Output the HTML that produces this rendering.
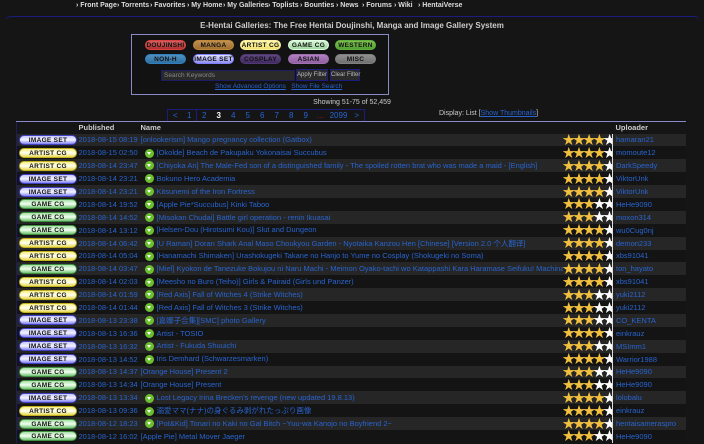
<!DOCTYPE html>
<html><head><meta charset="utf-8"><style>
*{margin:0;padding:0;box-sizing:border-box}
html,body{background:#151515}
body{width:704px;height:444px;overflow:hidden;font-family:"Liberation Sans","Noto Sans CJK JP",sans-serif;font-size:7.5px;color:#ccc;position:relative}
.a{position:absolute;white-space:nowrap}
.strip{position:absolute;background:#151515}
.nav span{position:absolute;top:2px;font-weight:bold;color:#ddd;font-size:7px}
.frame{position:absolute;left:5px;top:16px;width:695px;height:428px;border-top:1px solid #1c1c80;border-radius:6px 6px 0 0;background:#151515}
.box{position:absolute;left:131px;top:34px;width:258px;height:61px;border:1px solid #8a8ac8;background:#121212}
.cb{position:absolute;width:41px;height:10px;border-radius:5px;font-size:6.5px;font-weight:bold;color:#111;text-align:center;line-height:9px;letter-spacing:.3px}
a{color:#2864d0;text-decoration:none}
.pg{position:absolute;top:109px;left:167px;height:13px;display:flex;border:1px solid #1c1c80;background:#151515}
.pg div{width:14.5px;text-align:center;line-height:12px;color:#2864d0;font-size:8px}
.tw{position:absolute;left:16px;top:121px;width:670px;height:323px;overflow:hidden}
table{width:670px;border-collapse:collapse;border-top:1px solid #8a8ac8;border-left:1px solid #1c1c60;border-right:1px solid #1c1c60;table-layout:fixed}
td,th{height:12.9px;padding:0;white-space:nowrap;overflow:hidden;font-size:7.5px}
th{text-align:left;color:#ccc;font-weight:bold;height:12px}
tr:nth-child(odd) td{background:#262626}
tr:nth-child(even) td{background:#141414}
tr.h th{background:#151515}
.p{display:inline-block;width:58px;height:10px;border-radius:5px;font-size:6.5px;font-weight:bold;color:#111;text-align:center;line-height:9px;margin-left:2px;vertical-align:middle;letter-spacing:.3px}
.is{background:linear-gradient(#c8c8ff,#f4f4ff 50%,#8080f0);border:1px solid #4040c0}
.ac{background:linear-gradient(#f8f08a,#fffff0 50%,#e8d850);border:1px solid #c0b020}
.gc{background:linear-gradient(#a8e0a8,#f0fff0 50%,#70c070);border:1px solid #409040}
.d{color:#2864d0}
.i{display:inline-block;width:9px;height:9px;border-radius:50%;background:#6cc030;vertical-align:middle;margin:0 3px 0 4px;position:relative}
.i:after{content:"";position:absolute;left:2px;top:3px;border:2.5px solid transparent;border-top:3px solid #fff}
.st{color:#f2c040;font-size:12.5px;letter-spacing:-2.3px;border-right:1px solid #ddd;line-height:12px}
.st b{color:#fff;font-weight:normal}
</style></head><body style="background:#151515">
<div class="strip" style="left:0;top:0;width:704px;height:17px"></div>
<div class="strip" style="left:0;top:10px;width:6px;height:434px"></div>
<div class="strip" style="left:699px;top:10px;width:5px;height:434px"></div>
<div class="frame"></div>
<div class="nav">
<span style="left:76px">› Front Page</span><span style="left:117px">› Torrents</span><span style="left:150px">› Favorites</span><span style="left:187px">› My Home</span><span style="left:223px">› My Galleries</span><span style="left:268px">› Toplists</span><span style="left:300px">› Bounties</span><span style="left:336px">› News</span><span style="left:362px">› Forums</span><span style="left:394px">› Wiki</span><span style="left:418px">› HentaiVerse</span>
</div>
<div class="a" style="left:0;width:704px;text-align:center;top:21px;font-weight:bold;font-size:8px;color:#ccc">E-Hentai Galleries: The Free Hentai Doujinshi, Manga and Image Gallery System</div>
<div class="box"></div>
<div class="cb" style="left:145px;top:40px;background:linear-gradient(#d06060,#b03030);border:1px solid #e04040">DOUJINSHI</div>
<div class="cb" style="left:193px;top:40px;background:linear-gradient(#c09050,#a07030);border:1px solid #c08838">MANGA</div>
<div class="cb" style="left:240px;top:40px;background:linear-gradient(#fff8b0,#f0e070);border:1px solid #fff0a0">ARTIST CG</div>
<div class="cb" style="left:288px;top:40px;background:linear-gradient(#d8f8d8,#a0d8a0);border:1px solid #e0ffe0">GAME CG</div>
<div class="cb" style="left:335px;top:40px;background:linear-gradient(#80c050,#50a030);border:1px solid #60b040">WESTERN</div>
<div class="cb" style="left:145px;top:54px;background:linear-gradient(#5090c0,#3070a0);border:1px solid #3080c0">NON-H</div>
<div class="cb" style="left:193px;top:54px;background:linear-gradient(#e0e0ff,#9090f0);border:1px solid #8080ff">IMAGE SET</div>
<div class="cb" style="left:240px;top:54px;background:linear-gradient(#604880,#402860);border:1px solid #503870">COSPLAY</div>
<div class="cb" style="left:288px;top:54px;background:linear-gradient(#b080c0,#9060a0);border:1px solid #a070b0">ASIAN PORN</div>
<div class="cb" style="left:335px;top:54px;background:linear-gradient(#909090,#707070);border:1px solid #808080">MISC</div>
<div class="a" style="left:161px;top:70px;width:134px;height:11px;background:#2a2a2a;border:1px solid #1c1c60;color:#888;font-size:6.5px;line-height:9px;padding-left:2px">Search Keywords</div>
<div class="a" style="left:296px;top:69px;width:32px;height:12px;background:#2a2a2a;border:1px solid #1c1c80;color:#bbb;font-size:6px;line-height:10px;text-align:center">Apply Filter</div>
<div class="a" style="left:330px;top:69px;width:30px;height:12px;background:#2a2a2a;border:1px solid #1c1c80;color:#bbb;font-size:6px;line-height:10px;text-align:center">Clear Filter</div>
<div class="a" style="left:215px;top:83px;font-size:6.5px"><a style="text-decoration:underline">Show Advanced Options</a> &nbsp; <a style="text-decoration:underline">Show File Search</a></div>
<div class="a" style="left:0;width:704px;text-align:center;top:99px;font-size:7px;color:#ccc">Showing 51-75 of 52,459</div>
<div class="pg"><div>&lt;</div><div style="border-right:1px solid #1c1c80">1</div><div>2</div><div style="color:#fff;font-weight:bold">3</div><div>4</div><div>5</div><div>6</div><div>7</div><div>8</div><div>9</div><div style="color:#a02020">...</div><div style="width:22px">2099</div><div>&gt;</div></div>
<div class="a" style="left:439px;top:110px;font-size:7px;color:#ccc">Display: List [<a style="text-decoration:underline">Show Thumbnails</a>]</div>
<div class="tw"><table>
<colgroup><col style="width:62px"><col style="width:62px"><col style="width:422px"><col style="width:50px"><col style="width:74px"></colgroup>
<tr class="h"><th></th><th>Published</th><th>Name</th><th></th><th style="padding-left:3px">Uploader</th></tr>
<tbody id="b"></tbody>
</table></div>
<script>
var R=[["is","2018-08-15 08:19","[onlookerism] Mango pregnancy collection (Gatbox)","hamaran21",0,4],
["ac","2018-08-15 02:50","[Okolde] Beach de Pakupaku Yokonaisai Succubus","momoute12",1,4],
["ac","2018-08-14 23:47","[Chiyoka An] The Male-Fed son of a distinguished family - The spoiled rotten brat who was made a maid - [English]","DarkSpeedy",1,4],
["is","2018-08-14 23:21","Bokuno Hero Academia","ViktorUnk",1,4],
["is","2018-08-14 23:21","Kitsunemi of the Iron Fortress","ViktorUnk",1,4],
["gc","2018-08-14 19:52","[Apple Pie*Succubus] Kinki Taboo","HeHe9090",1,3],
["gc","2018-08-14 14:52","[Misokan Chudai] Battle girl operation - renin Ikuasai","moxon314",1,3],
["gc","2018-08-14 13:12","[Helsen-Dou (Hirotsumi Kou)] Slut and Dungeon","wu0Cug0nj",1,4],
["ac","2018-08-14 06:42","[U Raman] Doran Shark Anal Maso Choukyou Garden - Nyotaika Kanzou Hen [Chinese] [Version 2.0 个人翻译]","demon233",1,4],
["ac","2018-08-14 05:04","[Hanamachi Shimaken] Urashokugeki Takane no Hanjo to Yume no Cosplay (Shokugeki no Soma)","xbs91041",1,4],
["gc","2018-08-14 03:47","[Miel] Kyokon de Tanezuke Bokujou ni Naru Machi - Meimon Oyako-tachi wo Katappashi Kara Haramase Seifuku! Machinaka","ton_hayato",1,4],
["ac","2018-08-14 02:03","[Meesho no Buro (Teiho)] Girls & Pairaid (Girls und Panzer)","xbs91041",1,4],
["ac","2018-08-14 01:59","[Red Axis] Fall of Witches 4 (Strike Witches)","yuki2112",1,3],
["ac","2018-08-14 01:44","[Red Axis] Fall of Witches 3 (Strike Witches)","yuki2112",1,3],
["is","2018-08-13 23:38","[嘉娜子合集][SMC] photo Gallery","CO_KENTA",1,3],
["is","2018-08-13 16:36","Artist - TOSIO","einkrauz",1,4],
["is","2018-08-13 16:32","Artist - Fukuda Shuuichi","MSImm1",1,3],
["is","2018-08-13 14:52","Iris Demhard (Schwarzesmarken)","Warrior1988",1,4],
["gc","2018-08-13 14:37","[Orange House] Present 2","HeHe9090",0,3],
["gc","2018-08-13 14:34","[Orange House] Present","HeHe9090",0,3],
["is","2018-08-13 13:34","Lost Legacy Irina Brecken's revenge (new updated 19.8.13)","lolobalu",1,4],
["ac","2018-08-13 09:36","溺愛ママ(ナナ)の身ぐるみ剥がれたっぷり画像","einkrauz",1,4],
["gc","2018-08-12 18:23","[Pot&Kid] Tonari no Kaki no Gal Bitch ~Yuu-wa Kanojo no Boyfriend 2~","hentaisameraspro",1,4],
["gc","2018-08-12 16:02","[Apple Pie] Metal Mover Jaeger","HeHe9090",0,3]];
var N={is:"IMAGE SET",ac:"ARTIST CG",gc:"GAME CG"},h="";
R.forEach(function(r){var s="★★★★★".slice(0,r[5])+"<b>"+"★★★★★".slice(r[5])+"</b>";
h+='<tr><td><span class="p '+r[0]+'">'+N[r[0]]+'</span></td><td class="d">'+r[1]+'</td><td>'+(r[4]?'<span class="i"></span>':'')+'<a>'+r[2]+'</a></td><td class="st">'+s+'</td><td style="padding-left:3px"><a>'+r[3]+'</a></td></tr>';});
document.getElementById("b").innerHTML=h;
</script>
</body></html>
